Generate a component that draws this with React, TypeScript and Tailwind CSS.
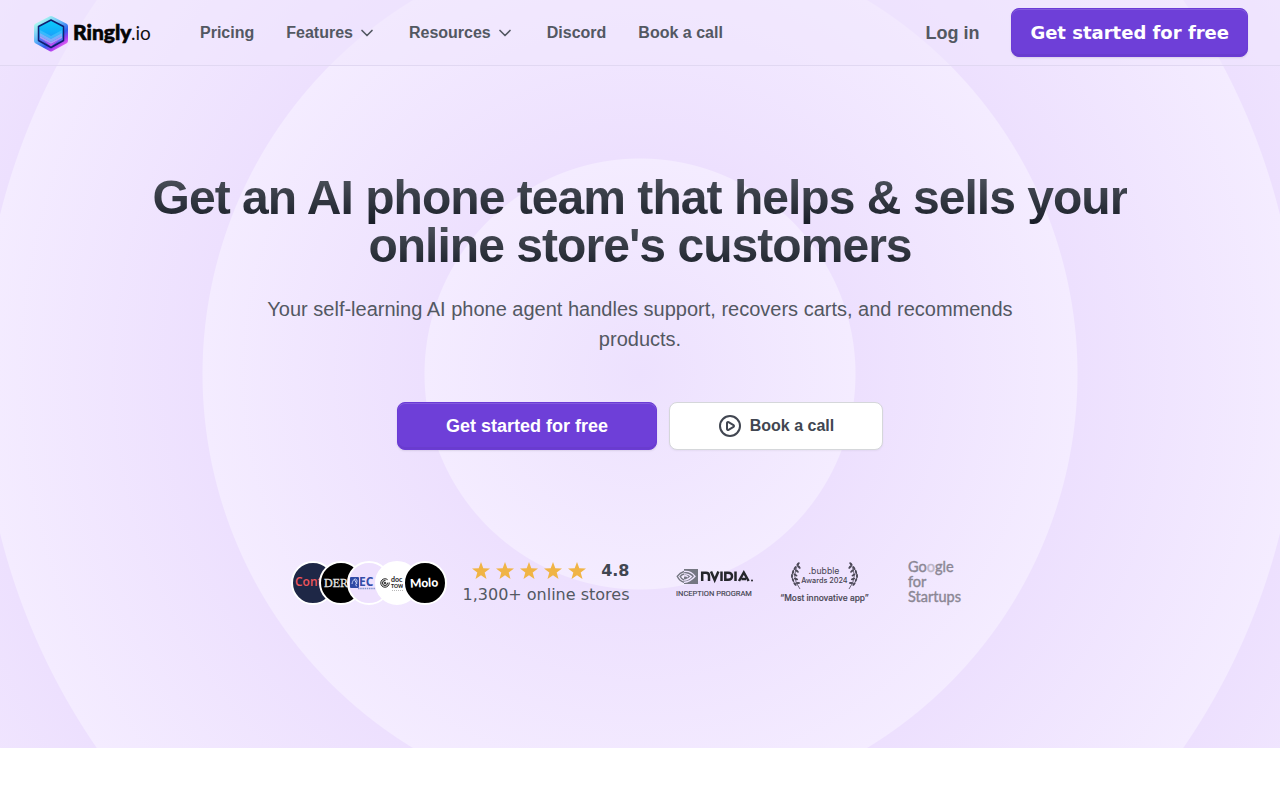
import { ChevronDown, CirclePlay } from "lucide-react";

const navLink = "text-base font-bold leading-6 text-[#535862] flex items-center gap-1";
const sans = "font-['Liberation_Sans',Arial,sans-serif]";

function Logo() {
  return (
    <a href="#home" aria-label="Ringly.io home" className="flex items-center">
      <svg width="120" height="40" viewBox="0 0 120 40">
        <defs>
          <linearGradient id="rim" x1="0.1" y1="0.1" x2="0.75" y2="1">
            <stop offset="0" stopColor="#a8f5f0" />
            <stop offset="0.4" stopColor="#5fb8f8" />
            <stop offset="0.7" stopColor="#2f5cee" />
            <stop offset="0.88" stopColor="#a53df0" />
            <stop offset="1" stopColor="#d95cf2" />
          </linearGradient>
          <linearGradient id="core" x1="0" y1="0" x2="0" y2="1">
            <stop offset="0" stopColor="#08cdfb" />
            <stop offset="0.5" stopColor="#16a9fb" />
            <stop offset="0.75" stopColor="#5a6cf0" />
            <stop offset="1" stopColor="#2f35c8" />
          </linearGradient>
        </defs>
        <path d="M19 5.500 L33.500 13 V28 L19 36 L4.500 28 V13 Z" fill="url(#rim)" stroke="url(#rim)" strokeWidth="5" strokeLinejoin="round" />
        <path d="M19 7 L31.500 13.500 V27.500 L19 34.500 L6.500 27.500 V13.500 Z" fill="url(#core)" stroke="#101f70" strokeWidth="1.500" strokeLinejoin="round" />
        <path d="M8 17 L19 23 L30 17 V20 L19 26 L8 20 Z" fill="#3fbffc" opacity=".8" />
        <path d="M8 20 L19 26 L30 20 V23 L19 29 L8 23 Z" fill="#7fb4fb" opacity=".9" />
        <path d="M8 23 L19 29 L30 23 V25 L19 31 L8 25 Z" fill="#a79afa" />
        <path d="M11 27 L19 31 L27 27 L19 33.500 Z" fill="#c24df0" />
        <text x="41" y="27" fontFamily="Lato, sans-serif" fontSize="21" fontWeight="900" fill="#050505" stroke="#050505" strokeWidth=".6">Ringly</text>
        <text x="99" y="27" fontFamily="Lato, sans-serif" fontSize="19" fill="#111">.io</text>
      </svg>
    </a>
  );
}

function Star() {
  return (
    <svg width="20" height="20" viewBox="0 0 20 20" fill="#f0b445" aria-hidden="true">
      <path d="M10 1 L12.300 7.300 L19 7.500 L13.700 11.600 L15.500 18 L10 14.300 L4.500 18 L6.300 11.600 L1 7.500 L7.700 7.300 Z" />
    </svg>
  );
}

const avatar = "size-11 shrink-0 rounded-full border-2 border-white overflow-hidden";

function Avatars() {
  return (
    <div className="flex -space-x-4">
      <svg className={`${avatar} bg-[#1e2746]`} viewBox="0 0 40 40">
        <text x="2" y="23" fontFamily="Open Sans, sans-serif" fontSize="12" fontWeight="600" fill="#f0555b">Cont</text>
      </svg>
      <svg className={`${avatar} bg-black`} viewBox="0 0 40 40">
        <text x="3" y="24" fontFamily="Liberation Serif, serif" fontSize="12" fill="#e5e5e5" stroke="#e5e5e5" strokeWidth=".3">DER</text>
      </svg>
      <svg className={`${avatar} bg-[#eee1fe]`} viewBox="0 0 40 40">
        <rect x="1" y="14" width="9" height="11" rx="1" fill="#2f4aa5" />
        <path d="M3 21 C4 15 8 15 8 18 S5 22 8 23 M5 16 L8 21" fill="none" stroke="#c5d0f5" strokeWidth="1" />
        <text x="10" y="23" fontFamily="Open Sans, sans-serif" fontSize="12" fontWeight="700" fill="#334da8">EC</text>
        <path d="M9 25.500 H26" stroke="#8696cd" strokeWidth="1.500" strokeDasharray="1.500 .7" />
      </svg>
      <svg className={`${avatar} bg-white`} viewBox="0 0 40 40">
        <g fill="none" stroke="#161616" strokeWidth="1">
          <circle cx="8" cy="20" r="4.200" strokeDasharray="22 3" />
          <circle cx="8" cy="20" r="2.500" strokeDasharray="12 3" />
          <circle cx="8" cy="20" r=".8" />
        </g>
        <text x="14" y="19" fontFamily="Lato, sans-serif" fontSize="7" fontWeight="700" fill="#222">doc</text>
        <text x="14" y="25" fontFamily="Lato, sans-serif" fontSize="5" fontWeight="900" fill="#222">TOW</text>
        <path d="M15 27.500 H26" stroke="#999" strokeWidth=".7" strokeDasharray="1 1" />
      </svg>
      <svg className={`${avatar} bg-black`} viewBox="0 0 40 40">
        <text x="5" y="24" fontFamily="Lato, sans-serif" fontSize="12" fontWeight="900" fill="#fff" transform="rotate(-3 20 20)">Molo</text>
      </svg>
    </div>
  );
}

function Nvidia() {
  return (
    <svg width="80" height="32" viewBox="0 0 80 32" role="img" aria-label="NVIDIA Inception Program">
      <rect x="8" y="2" width="14" height="15" fill="#757782" />
      <g fill="none" strokeWidth="1.400">
        <path d="M8 4.500 C4.500 5.500 2.500 7.500 1.200 9.300 C2.500 12 5 14.500 8 15.200 M8 7 C6 7.500 5 8.500 4.200 9.500 C5 11 6.500 12.500 8 13" stroke="#757782" />
        <path d="M8 4.500 C13 3.800 16.500 6 19 9.300 C16 12.700 12 15.500 8 15.200 M8 7 C11.500 6.500 13.500 7.800 15.300 9.600 C13 12 10.500 13.500 8 13 M8 9 C10 8.300 11 9 12 10" stroke="#efe5fe" />
      </g>
      <g fill="none" stroke="#25262b" strokeWidth="2.500">
        <path d="M26.200 14 V5.800 H30 Q33 5.800 33 9 V14" />
        <path d="M35 4.500 L38.700 13 L42.400 4.500" />
        <path d="M45.500 4.500 V14" />
        <path d="M49.300 5.800 H52 Q56 5.800 56 9.300 T52 12.800 H49.300 Z" />
        <path d="M59.500 4.500 V14" />
        <path d="M63 14 L67.800 5.500 L72.600 14 M65.500 12 H70" />
      </g>
      <circle cx="76" cy="13.500" r="1" fill="#25262b" />
      <text x="0" y="29" fontFamily="Roboto, sans-serif" fontSize="7.500" fill="#41424d" stroke="#41424d" strokeWidth=".15">INCEPTION PROGRAM</text>
    </svg>
  );
}

const leaves = [
  [8, 3, 130], [5, 7, 120], [3, 11, 105], [2, 15, 90], [3, 19, 70], [5, 23, 50],
  [9, 6, 50], [7, 10, 40], [5.5, 14, 30], [6, 18, 15], [8, 22, 0],
];

function Laurel() {
  return (
    <g fill="#4b4857">
      {leaves.map(([x, y, r]) => (
        <ellipse key={`${x}-${y}`} cx={x} cy={y} rx="2.200" ry="1" transform={`rotate(${r - 180} ${x} ${y})`} />
      ))}
      <path d="M9 2 Q0 15 10 28" fill="none" stroke="#4b4857" strokeWidth=".8" />
    </g>
  );
}

function Bubble() {
  return (
    <svg width="90" height="46" viewBox="0 0 90 46" role="img" aria-label="Bubble Awards 2024, most innovative app">
      <g transform="translate(10 1)"><Laurel /></g>
      <g transform="translate(79 1) scale(-1 1)"><Laurel /></g>
      <g fill="#484552" fontFamily="Inter, sans-serif" textAnchor="middle">
        <text x="44" y="14" fontSize="8.700">.bubble</text>
        <text x="44.500" y="22.500" fontSize="7.300" fontWeight="500">Awards 2024</text>
        <text x="44.500" y="41" fontSize="8.400" fontWeight="500" stroke="#484552" strokeWidth=".15">“Most innovative app”</text>
      </g>
    </svg>
  );
}

function GoogleStartups() {
  return (
    <svg width="56" height="48" viewBox="0 0 56 48" role="img" aria-label="Google for Startups">
      <g fontFamily="Lato, sans-serif" fontSize="14.500" fill="#8b8794" stroke="#8b8794" strokeWidth=".4">
        <text x="2" y="13">Go<tspan fill="#bcb6c7" stroke="#bcb6c7">o</tspan>gle</text>
        <text x="2" y="28">for</text>
        <text x="2" y="43">Startups</text>
      </g>
    </svg>
  );
}

const primary =
  "flex items-center justify-center rounded-lg border border-[#6b3bd6] bg-[#6e3fd8] text-lg font-bold text-white shadow-[0_1px_2px_rgba(16,24,40,0.1),inset_0_1px_0_rgba(255,255,255,0.15),inset_0_-2px_0_rgba(10,13,18,0.05)]";

export default function App() {
  return (
    <div className={`min-h-screen bg-white ${sans}`}>
      <div className="bg-[radial-gradient(circle_at_center,#ede1fe_0px,#f4ecff_215px,#ede0fe_216px,#f4ecff_437px,#ede0fe_438px,#f4ecff_659px,#ede0fe_660px,#f4ecff_881px)]">
        <header className="flex items-center border-b border-[#e1d8f2] bg-[#efe5fe]/50 px-8 py-2">
          <Logo />
          <nav className="ml-12 flex items-center gap-8">
            <a href="#pricing" className={navLink}>Pricing</a>
            <button className={navLink}>Features <ChevronDown size={20} /></button>
            <button className={navLink}>Resources <ChevronDown size={20} /></button>
            <a href="#discord" className={navLink}>Discord</a>
            <a href="#call" className={navLink}>Book a call</a>
          </nav>
          <div className="ml-auto flex items-center gap-8">
            <a href="#login" className="text-lg font-bold text-[#535862]">Log in</a>
            <a href="#start" className={`${primary} h-[49px] px-[18px] font-['DejaVu_Sans',sans-serif]`}>Get started for free</a>
          </div>
        </header>

        <main className="flex flex-col items-center px-8 pt-27 pb-[141px]">
          <h1 className="max-w-[1024px] text-center text-5xl leading-[48px] font-bold tracking-[-0.02em]">
            <span className="bg-[linear-gradient(180deg,#535862_0%,#181d27_100%)] bg-clip-text text-transparent box-decoration-clone">
              Get an AI phone team that helps &amp; sells your online store's customers
            </span>
          </h1>
          <p className="mt-6 max-w-3xl text-center text-xl leading-[30px] text-[#535862]">
            Your self-learning AI phone agent handles support, recovers carts, and recommends products.
          </p>
          <div className="mt-12 flex gap-3">
            <a href="#start" className={`${primary} h-12 w-[260px]`}>Get started for free</a>
            <a href="#call" className="flex h-12 w-[214px] items-center justify-center gap-2 rounded-lg border border-[#d5d7da] bg-white text-base font-bold text-[#414651] shadow-xs">
              <CirclePlay size={24} /> Book a call
            </a>
          </div>

          <div className="mt-[109px] flex items-center pr-4">
            <Avatars />
            <div className="ml-4 flex flex-col items-end font-['DejaVu_Sans',sans-serif] text-base leading-6 text-[#535862]">
              <div className="flex items-center">
                <div className="mr-3.5 flex gap-1"><Star /><Star /><Star /><Star /><Star /></div>
                <span className="font-bold text-[#414651]">4.8</span>
              </div>
              <span>1,300+ online stores</span>
            </div>
            <div className="ml-[46px] flex items-center gap-6">
              <Nvidia />
              <Bubble />
              <div className="px-3"><GoogleStartups /></div>
            </div>
          </div>
        </main>
      </div>
    </div>
  );
}
